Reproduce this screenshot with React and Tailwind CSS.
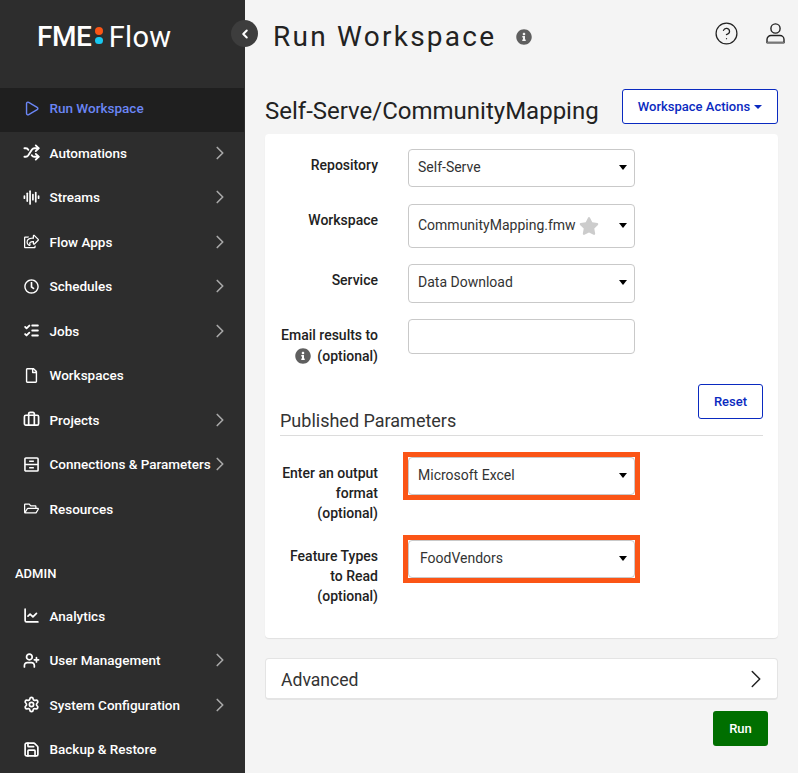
import React from "react";
import {
  Play,
  Shuffle,
  AudioLines,
  ListChecks,
  Briefcase,
  ChartLine,
  UserPlus,
  Settings,
  Save,
  ChevronRight,
  ChevronLeft,
  CircleHelp,
} from "lucide-react";
import { FaRegClock, FaRegFile, FaRegFolderOpen, FaRegShareSquare, FaStar, FaInfoCircle } from "react-icons/fa";

const DrawerIcon = ({ className }) => (
  <svg viewBox="0 0 16 16" className={className} fill="none" stroke="currentColor" strokeWidth="1.7">
    <rect x="1" y="1" width="14" height="14" rx="1" />
    <path d="M1 8h14M5.5 4.5h5M5.5 11.5h5" />
  </svg>
);

const UserIcon = ({ className }) => (
  <svg viewBox="0 0 19 21" className={className} fill="none" stroke="currentColor" strokeWidth="1.4">
    <circle cx="9.5" cy="5.5" r="4.6" />
    <path d="M1 19.5v-3a4 4 0 0 1 4-4h9a4 4 0 0 1 4 4v3z" />
    <path d="M1 19.8h17" strokeWidth="1.8" stroke="#777" />
  </svg>
);

const menu = [
  { label: "Automations", icon: Shuffle, stroke: 2.6, arrow: true },
  { label: "Streams", icon: AudioLines, stroke: 2.4, arrow: true },
  { label: "Flow Apps", icon: FaRegShareSquare, arrow: true },
  { label: "Schedules", icon: FaRegClock, arrow: true },
  { label: "Jobs", icon: ListChecks, stroke: 2.6, arrow: true },
  { label: "Workspaces", icon: FaRegFile },
  { label: "Projects", icon: Briefcase, stroke: 2.4, arrow: true },
  { label: "Connections & Parameters", icon: DrawerIcon, arrow: true },
  { label: "Resources", icon: FaRegFolderOpen },
];

const admin = [
  { label: "Analytics", icon: ChartLine, stroke: 2.4 },
  { label: "User Management", icon: UserPlus, stroke: 2.4, arrow: true },
  { label: "System Configuration", icon: Settings, stroke: 2.4, arrow: true },
  { label: "Backup & Restore", icon: Save, stroke: 2.4 },
];

function NavItem({ label, icon: Icon, stroke, arrow }) {
  return (
    <div className="h-[44.5px] flex items-center pl-[24px] pb-[3px] text-[13.5px] font-medium text-white">
      <span className="w-[15px] h-[16px] shrink-0 flex items-center justify-center">
        {stroke ? (
          <Icon className="w-[17px] h-[17px] shrink-0" strokeWidth={stroke} />
        ) : (
          <Icon className="w-[15px] h-[15px] shrink-0" />
        )}
      </span>
      <span className="ml-[10.5px] whitespace-nowrap">{label}</span>
      {arrow && <ChevronRight className="absolute left-[208.5px] w-[22px] h-[22px] text-[#a8a8a8]" strokeWidth={1.8} />}
    </div>
  );
}

function Select({ value, height = "h-[38px]", pad = "pl-[9px] pb-[1px]", children }) {
  return (
    <div
      className={`w-[227px] ${height} ${pad} pr-[6px] flex items-center bg-white border border-[#c9c9c9] rounded-[4px] text-[14px] text-[#333]`}
    >
      <span>{value}</span>
      {children}
      <span className="ml-auto mr-[1px] w-0 h-0 border-x-[4px] border-x-transparent border-t-[5px] border-t-black" />
    </div>
  );
}

function Label({ children, className = "" }) {
  return (
    <div className={`w-[98px] shrink-0 text-right text-[14px] leading-[20px] font-medium text-[#222] ${className}`}>
      {children}
    </div>
  );
}

export default function App() {
  return (
    <div className="relative flex w-[798px] h-[773px] overflow-hidden bg-[#f4f4f4] font-['Roboto',sans-serif]">
      {/* Sidebar */}
      <aside className="w-[245px] h-full shrink-0 bg-[#2d2d2d]">
        <div className="h-[88px] pl-[37px] pt-[18px] flex items-start text-white">
          <span className="text-[28px] leading-[38px] font-medium tracking-[-0.5px]">FME</span>
          <span className="ml-[4px] mt-[9px] flex flex-col gap-[2px]">
            <span className="w-[7.5px] h-[7.5px] rounded-full bg-[#fb5516]" />
            <span className="w-[7.5px] h-[7.5px] rounded-full bg-[#19c8f0]" />
          </span>
          <span className="ml-[6px] text-[29px] leading-[38px] tracking-[0.3px]">Flow</span>
        </div>
        <div className="h-[44px] mr-[1px] flex items-center pl-[24px] pb-[3px] bg-[#1f1f1f] text-[13.5px] font-medium text-[#6b86f5]">
          <span className="w-[15px] h-[16px] shrink-0 flex items-center justify-center">
            <Play className="w-[17px] h-[17px] shrink-0" strokeWidth={2} />
          </span>
          <span className="ml-[10.5px]">Run Workspace</span>
        </div>
        {menu.map((item) => (
          <NavItem key={item.label} {...item} />
        ))}
        <div className="h-[62.5px] pl-[15px] pt-[32px] text-[13px] leading-[18px] font-medium text-white">ADMIN</div>
        {admin.map((item) => (
          <NavItem key={item.label} {...item} />
        ))}
      </aside>

      {/* Collapse toggle */}
      <button className="absolute left-[231px] top-[20px] w-[27px] h-[27px] rounded-full bg-[#3d3d3d] flex items-center justify-center text-white">
        <ChevronLeft className="w-[14px] h-[14px]" strokeWidth={3.5} />
      </button>

      {/* Main */}
      <main className="flex-1 px-[20px]">
        <header className="h-[89px] flex items-start">
          <h1 className="ml-[8px] mt-[19px] text-[28px] leading-[36px] tracking-[2.25px] text-[#222]">Run Workspace</h1>
          <FaInfoCircle className="ml-[20px] mt-[29px] w-[16px] h-[16px] text-[#5f5f5f]" />
          <CircleHelp className="ml-auto mt-[20.5px] w-[25px] h-[25px] text-[#222]" strokeWidth={1.2} />
          <UserIcon className="ml-[27px] -mr-[7px] mt-[23px] w-[19px] h-[21px] shrink-0 text-[#222]" />
        </header>

        <div className="h-[35px] flex justify-between">
          <h2 className="mt-[7px] text-[24px] leading-[30px] text-[#222]">Self-Serve/CommunityMapping</h2>
          <button className="w-[156px] h-[35px] border border-[#0a2ac0] rounded-[3px] bg-white text-[13px] font-medium text-[#0a2ac0] flex items-center justify-center gap-[4px]">
            Workspace Actions
            <span className="w-0 h-0 border-x-[4px] border-x-transparent border-t-[4px] border-t-[#0a2ac0]" />
          </button>
        </div>

        <section className="mt-[10px] h-[504px] bg-white rounded-[4px] px-[15px] pt-[15px] shadow-[0_1px_1px_rgba(0,0,0,0.08)]">
          <div className="flex gap-[30px]">
            <Label className="pt-[6px]">Repository</Label>
            <Select value="Self-Serve" />
          </div>
          <div className="mt-[17px] flex gap-[30px]">
            <Label className="pt-[6px]">Workspace</Label>
            <Select value="CommunityMapping.fmw" height="h-[44px]">
              <FaStar className="ml-[3px] w-[20px] h-[20px] text-[#cccccc]" />
            </Select>
          </div>
          <div className="mt-[16px] flex gap-[30px]">
            <Label className="pt-[6px]">Service</Label>
            <Select value="Data Download" height="h-[39px]" pad="pl-[9px] pb-[2px]" />
          </div>
          <div className="mt-[16px] h-[35px] flex gap-[30px]">
            <Label className="pt-[6px]">
              Email results to
              <span className="mt-[1px] flex items-center justify-end gap-[6px]">
                <FaInfoCircle className="w-[16px] h-[16px] text-[#5f5f5f]" />
                (optional)
              </span>
            </Label>
            <div className="w-[227px] h-[35px] bg-white border border-[#c9c9c9] rounded-[4px]" />
          </div>

          <div className="mt-[30px] h-[52px] flex justify-between border-b border-[#dcdcdc]">
            <h3 className="self-end pb-[2px] text-[18px] leading-[24px] text-[#333]">Published Parameters</h3>
            <button className="w-[65px] h-[35px] border border-[#0a2ac0] rounded-[3px] bg-white text-[13px] font-medium text-[#0a2ac0]">
              Reset
            </button>
          </div>

          <div className="mt-[21px] flex gap-[30px]">
            <Label className="pt-[6px]">Enter an output format (optional)</Label>
            <div className="-m-[5px] h-fit border-[5px] border-[#fb5516]">
              <Select value="Microsoft Excel" />
            </div>
          </div>
          <div className="mt-[17px] flex gap-[30px]">
            <Label className="pt-[6px]">
              Feature Types
              <br />
              to Read
              <br />
              (optional)
            </Label>
            <div className="-m-[5px] h-fit border-[5px] border-[#fb5516]">
              <Select value="FoodVendors" pad="pl-[11px] pb-[1px]" />
            </div>
          </div>
        </section>

        <div className="mt-[20px] h-[42px] bg-white rounded-[4px] border border-b-2 border-[#e4e4e4] pl-[15px] pr-[6px] flex items-center justify-between text-[17.6px] text-[#333]">
          <span className="pt-[4px]">Advanced</span>
          <ChevronRight className="w-[30px] h-[30px] text-[#222]" strokeWidth={1.2} />
        </div>

        <div className="mt-[11px] flex justify-end pr-[10px]">
          <button className="w-[55px] h-[35px] rounded-[3px] bg-[#006f00] text-[13px] font-medium text-white">Run</button>
        </div>
      </main>
    </div>
  );
}
